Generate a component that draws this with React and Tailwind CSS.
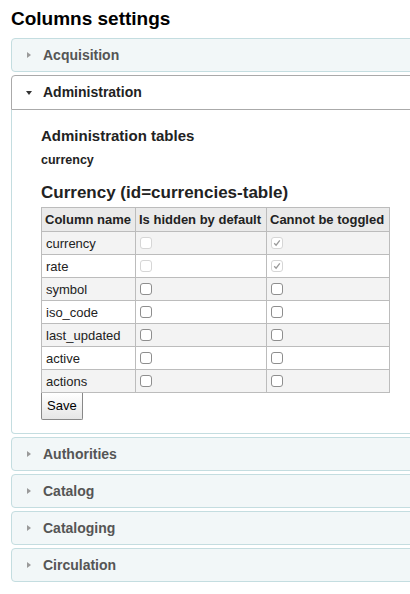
const rows = [
  { name: "currency", hidden: false, locked: true, fixed: true },
  { name: "rate", hidden: false, locked: true, fixed: true },
  { name: "symbol" },
  { name: "iso_code" },
  { name: "last_updated" },
  { name: "active" },
  { name: "actions" },
]

const after = ["Authorities", "Catalog", "Cataloging", "Circulation"]

function Box({ checked, disabled }) {
  return (
    <span
      className={`inline-flex items-center justify-center w-[12px] h-[12px] rounded-[3px] border bg-white ${
        disabled ? "border-[#d6d6d6]" : "border-[#8e8e8e]"
      }`}
    >
      {checked && (
        <svg width="8" height="8" viewBox="0 0 8 8">
          <path d="M1.2 4.3 L3.1 6.2 L6.8 1.4" fill="none" stroke="#9a9a9a" strokeWidth="1.3" />
        </svg>
      )}
    </span>
  )
}

function Closed({ title }) {
  return (
    <div className="h-[34px] flex items-center border border-[#c4dde0] bg-[#f2f7f8] rounded-[4px]">
      <span className="ml-[15px] w-0 h-0 border-y-[3.5px] border-y-transparent border-l-[4px] border-l-[#9a9a9a]" />
      <span className="ml-[12px] text-[14px] font-bold text-[#555]">{title}</span>
    </div>
  )
}

export default function App() {
  return (
    <div className="w-[410px] h-[594px] overflow-hidden bg-white text-[#222] [font-family:'Liberation_Sans',Arial,sans-serif]">
      <h1 className="pl-[11px] pt-[7px] text-[19px] leading-[23px] font-bold text-black">Columns settings</h1>
      <div className="ml-[11px] w-[420px] mt-[8px] flex flex-col gap-[3px]">
        <Closed title="Acquisition" />
        <div>
          <div className="h-[35px] flex items-center border border-[#aaa] rounded-t-[4px] bg-white">
            <span className="ml-[14px] w-0 h-0 border-x-[3.5px] border-x-transparent border-t-[4px] border-t-[#333]" />
            <span className="ml-[11px] text-[14px] font-bold text-[#222]">Administration</span>
          </div>
          <div className="border border-t-0 border-[#c4dde0] rounded-b-[4px] pl-[29px] pt-[17px] pb-[13px]">
            <h2 className="text-[15px] leading-[18px] font-bold">Administration tables</h2>
            <h3 className="mt-[8px] text-[12.5px] leading-[15px] font-bold">currency</h3>
            <h3 className="mt-[12px] text-[17px] leading-[26px] font-bold">Currency (id=currencies-table)</h3>
            <table className="mt-[1px] table-fixed border-collapse text-[13px] leading-[15px] whitespace-nowrap">
              <thead>
                <tr className="bg-[#eaeaea]">
                  <th className="border border-[#bcbcbc] w-[94px] h-[24px] px-[3px] text-left font-bold">Column name</th>
                  <th className="border border-[#bcbcbc] w-[131px] px-[3px] text-left font-bold">Is hidden by default</th>
                  <th className="border border-[#bcbcbc] w-[123px] px-[3px] text-left font-bold">Cannot be toggled</th>
                </tr>
              </thead>
              <tbody>
                {rows.map((r, i) => (
                  <tr key={r.name} className={i % 2 === 0 ? "bg-[#f3f3f3]" : "bg-white"}>
                    <td className="border border-[#bcbcbc] h-[23px] px-[4px]">{r.name}</td>
                    <td className="border border-[#bcbcbc] px-[4px]">
                      <div className="flex"><Box disabled={r.fixed} /></div>
                    </td>
                    <td className="border border-[#bcbcbc] px-[4px]">
                      <div className="flex"><Box checked={r.locked} disabled={r.fixed} /></div>
                    </td>
                  </tr>
                ))}
              </tbody>
            </table>
            <button className="h-[27px] px-[5px] text-[13px] text-black bg-gradient-to-b from-white to-[#e6e6e6] border border-[#888] border-t-0 rounded-b-[2px]">
              Save
            </button>
          </div>
        </div>
        {after.map(t => <Closed key={t} title={t} />)}
      </div>
    </div>
  )
}
